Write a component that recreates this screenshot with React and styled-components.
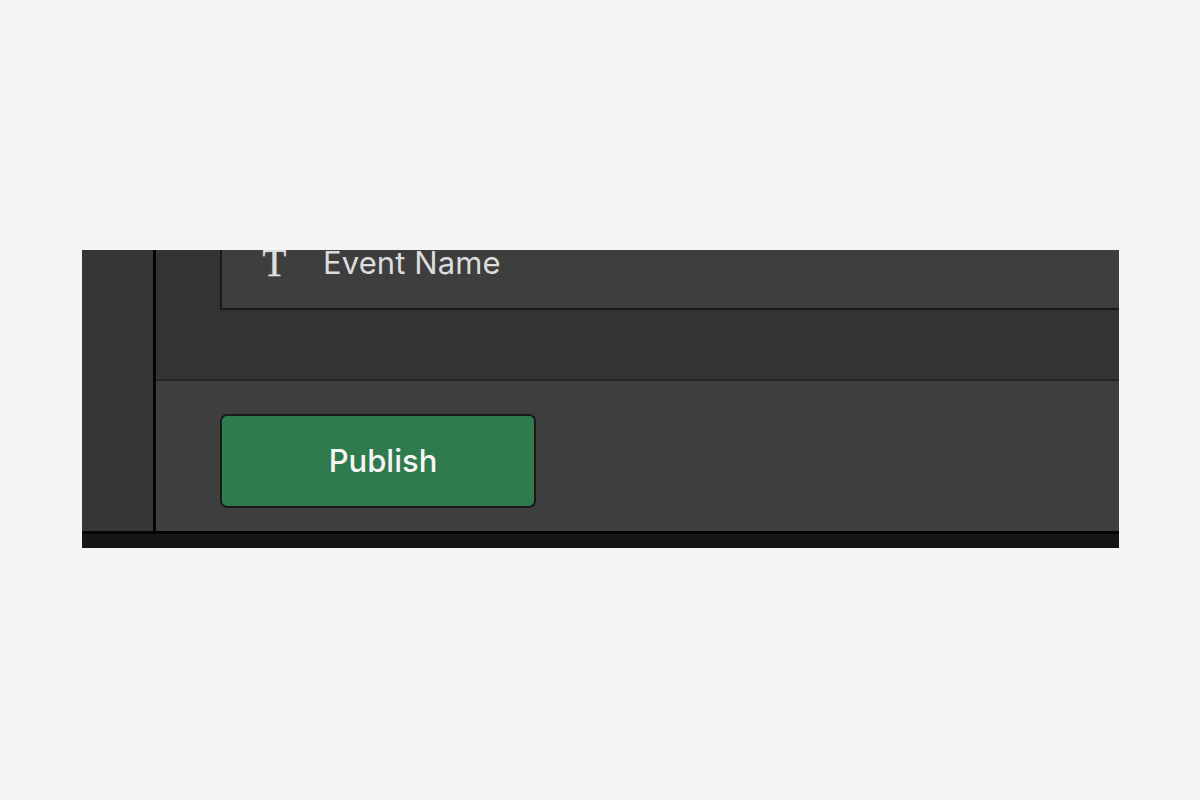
import React from "react";
import styled, { createGlobalStyle } from "styled-components";

const GlobalStyle = createGlobalStyle`
  html, body {
    margin: 0;
    height: 100%;
    background: #f5f5f5;
    font-family: Inter, "Liberation Sans", sans-serif;
  }
`;

const Page = styled.div`
  width: 1200px;
  height: 800px;
  display: flex;
  align-items: flex-start;
  padding: 250px 81px 0 82px;
  box-sizing: border-box;
`;

const Frame = styled.div`
  flex: 1;
  height: 298px;
  display: flex;
  flex-direction: column;
  background: #161616;
`;

const Body = styled.div`
  height: 281px;
  display: flex;
  border-bottom: 3px solid #050505;
  overflow: hidden;
`;

const Rail = styled.div`
  width: 71px;
  flex-shrink: 0;
  background: #363636;
  border-right: 3px solid #050505;
`;

const Main = styled.div`
  flex: 1;
  display: flex;
  flex-direction: column;
`;

const FormArea = styled.div`
  height: 131px;
  flex-shrink: 0;
  box-sizing: border-box;
  background: #333333;
  padding: 0 0 70px 64px;
  display: flex;
  border-bottom: 2px solid #262626;
`;

const FieldCard = styled.div`
  flex: 1;
  height: 60px;
  box-sizing: border-box;
  background: #3e3e3e;
  border-left: 2px solid #1a1a1a;
  border-bottom: 2px solid #1a1a1a;
  padding: 0 0 24px 40px;
  display: flex;
  align-items: flex-end;
  gap: 36px;
`;

const TypeIcon = styled.span`
  font-family: "Liberation Serif", serif;
  font-size: 39px;
  line-height: 42px;
  width: 25px;
  color: #dedede;
  text-align: center;
  -webkit-text-stroke: 0.4px #dedede;
`;

const FieldLabel = styled.span`
  font-size: 31px;
  line-height: 42px;
  letter-spacing: 0.1px;
  color: #dcdcdc;
`;

const Footer = styled.div`
  flex: 1;
  background: #3e3e3e;
  padding: 33px 0 0 64px;
`;

const PublishButton = styled.button`
  width: 316px;
  height: 94px;
  box-sizing: border-box;
  display: flex;
  align-items: center;
  justify-content: center;
  padding: 0 0 2px 10px;
  background: #2f7b4e;
  border: 2px solid #1a1a1a;
  border-radius: 7px;
  color: #f6f6f6;
  font-family: inherit;
  font-size: 31px;
  font-weight: 450;
`;

export default function App() {
  return (
    <Page>
      <GlobalStyle />
      <Frame>
        <Body>
          <Rail />
          <Main>
            <FormArea>
              <FieldCard>
                <TypeIcon>T</TypeIcon>
                <FieldLabel>Event Name</FieldLabel>
              </FieldCard>
            </FormArea>
            <Footer>
              <PublishButton>Publish</PublishButton>
            </Footer>
          </Main>
        </Body>
      </Frame>
    </Page>
  );
}
